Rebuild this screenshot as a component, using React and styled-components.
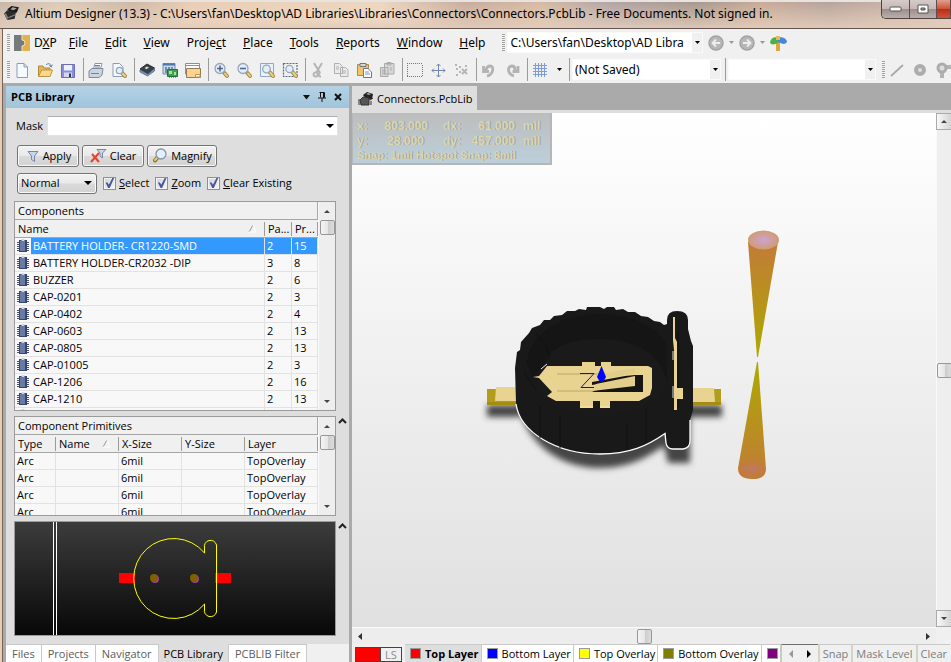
import React, { useState } from "react";
import styled, { createGlobalStyle, css } from "styled-components";

const Global = createGlobalStyle`
  *, *::before, *::after { box-sizing: border-box; }
  body { margin: 0; background: #aaa; }
  button, input, select { font: inherit; color: inherit; margin: 0; }
  button { padding: 0; border: 0; background: none; }
  svg { display: block; flex: none; }
`;

const Window = styled.div`
  display: flex;
  flex-direction: column;
  height: 100vh;
  min-height: 480px;
  overflow: hidden;
  color: #000;
  font: 11px/16px "Open Sans", "Noto Sans", sans-serif;
`;

const TitleBar = styled.header`
  display: flex;
  height: 29px;
  flex: none;
  border-bottom: 1px solid #65544b;
  box-shadow: inset 0 2px #e9e3df;
  background:
    linear-gradient(180deg, rgba(255, 238, 220, 0) 0%, rgba(240, 216, 194, 0.5) 70%, rgba(225, 205, 190, 0.9) 100%),
    linear-gradient(90deg, #c5b5a6, #dccbb9 6%, #cbb7a5 14%, #e9ccb4 20%, #ecd7c1 40%, #c5aa9c 49%, #d4b8a2 57%, #b0a2a6 64%, #a3958c 73%, #c6a896 80%, #b3a19a 87%, #d5bdac);
`;

const AppIcon = styled.div`
  padding: 5px 5px 0 3px;
`;

const WindowTitle = styled.h1`
  flex: 1;
  min-width: 0;
  margin: 0;
  overflow: hidden;
  white-space: nowrap;
  font-family: "Noto Sans", sans-serif;
  font-size: 12px;
  font-weight: 400;
  line-height: 27px;
`;

const Controls = styled.div`
  display: flex;
  height: 19px;
  border: 1px solid #4d4341;
  border-width: 0 0 1px 1px;
  border-radius: 0 0 0 5px;
  overflow: hidden;
`;

const ControlButton = styled.button`
  display: flex;
  align-items: center;
  justify-content: center;
  width: ${(p) => p.$w}px;
  border-right: 1px solid #5b4e4c;
  background: ${(p) =>
    p.$close
      ? "linear-gradient(#e0a090, #cf5238 48%, #b92c14 50%, #d0523a)"
      : "linear-gradient(#d5cbc9, #c5b8b6 48%, #9c8d8d 50%, #bcaeac)"};
`;

const Frame = styled.div`
  display: flex;
  flex: 1;
  flex-direction: column;
  min-height: 0;
  border-left: 2px solid #e6cdb8;
  box-shadow: inset 1px 0 #766459;
  padding-left: 1px;
  background: #aaa;
`;

const Bar = styled.div`
  display: flex;
  flex: none;
  align-items: center;
  height: 27px;
  padding-left: 4px;
  overflow: hidden;
  background: #f0f0f0;
  font-family: "Noto Sans", sans-serif;
  font-size: 12px;
`;

const Grip = styled.span`
  flex: none;
  width: 3px;
  height: 17px;
  margin-right: ${(p) => p.$after || 4}px;
  background: repeating-linear-gradient(180deg, #a0a0a0 0 1px, #f4f4f4 1px 2px);
`;

const MenuButton = styled.button`
  display: flex;
  flex: none;
  gap: 4px;
  align-items: center;
  margin-right: ${(p) => p.$after || 17}px;
  line-height: 20px;
  white-space: nowrap;
`;

const IconButton = styled.button`
  flex: none;
  width: 16px;
  height: 18px;
  margin-right: 7px;
`;

const Separator = styled.span`
  flex: none;
  width: 1px;
  height: 23px;
  margin-right: ${(p) => p.$after || 4}px;
  background: #9b9b9b;
`;

const CaretButton = styled.button`
  flex: none;
  display: flex;
  align-items: center;
  justify-content: center;
  width: ${(p) => p.$w || 8}px;
  height: 18px;
  margin-right: ${(p) => p.$after || 0}px;
`;

const ComboWrap = styled.span`
  position: relative;
  display: flex;
  flex: none;
  width: ${(p) => p.$w}px;
  height: 21px;
  margin-right: ${(p) => p.$after}px;
  background: #fff;
`;

const ComboSelect = styled.select`
  appearance: none;
  width: 100%;
  padding: 0 12px 0 2px;
  border: 1px solid #fafafa;
  border-radius: 0;
  background: transparent;
`;

const ComboArrow = styled.span`
  position: absolute;
  top: 1px;
  right: 1px;
  bottom: 1px;
  display: flex;
  align-items: center;
  justify-content: center;
  width: 10px;
  background: #f0f0f0;
  pointer-events: none;
`;

const Workspace = styled.main`
  display: grid;
  flex: 1;
  grid-template-columns: 343px minmax(0, 1fr);
  gap: 3px;
  min-height: 0;
  padding: 3px 0 0 3px;
`;

const Panel = styled.aside`
  display: flex;
  flex-direction: column;
  min-height: 0;
  background: #dedede;
`;

const PanelHeader = styled.div`
  display: flex;
  flex: none;
  align-items: center;
  height: 22px;
  padding: 0 3px 0 5px;
  background: linear-gradient(#b4d2e6, #a0c4da);
`;

const PanelTitle = styled.h2`
  flex: 1;
  margin: 0;
  font-size: 11px;
  font-weight: 700;
`;

const PanelTool = styled.button`
  width: 16px;
  height: 16px;
`;

const MaskRow = styled.div`
  display: flex;
  flex: none;
  align-items: center;
  gap: 4px;
  height: 20px;
  margin: 8px 11px 0 10px;
`;

const MaskField = styled.span`
  position: relative;
  display: flex;
  flex: 1;
`;

const MaskInput = styled.input`
  width: 100%;
  height: 20px;
  padding: 0 16px 0 3px;
  border: 1px solid #e2e3ea;
  border-top-color: #abadb3;
  outline: 0;
`;

const MaskArrow = styled.button`
  position: absolute;
  top: 8px;
  right: 4px;
`;

const ControlRow = styled.div`
  display: flex;
  flex: none;
  align-items: center;
  gap: ${(p) => p.$gap}px;
  height: 22px;
  margin: ${(p) => p.$top}px 11px 0 11px;
`;

const raised = css`
  border: 1px solid #747474;
  border-radius: 3px;
  box-shadow: inset 0 0 0 1px #f8f8f8;
  background: linear-gradient(#f2f2f2, #e9e9e9 48%, #dadada 52%, #d2d2d2);
`;

const PushButton = styled.button`
  ${raised}
  display: flex;
  align-items: center;
  justify-content: center;
  gap: ${(p) => p.$gap}px;
  width: ${(p) => p.$w}px;
  height: 22px;
`;

const ModeWrap = styled.span`
  ${raised}
  position: relative;
  display: flex;
  width: 80px;
  height: 21px;
`;

const ModeSelect = styled.select`
  appearance: none;
  width: 100%;
  padding: 0 14px 0 3px;
  border: 0;
  background: transparent;
`;

const ModeArrow = styled.span`
  position: absolute;
  top: 7px;
  right: 4px;
  pointer-events: none;
`;

const CheckLabel = styled.label`
  display: flex;
  align-items: center;
  gap: 3px;
  white-space: nowrap;
`;

const CheckBox = styled.input`
  appearance: none;
  flex: none;
  width: 13px;
  height: 13px;
  border: 1px solid #8e8f8f;
  box-shadow: inset 0 0 0 1px #f4f4f4;
  background: linear-gradient(135deg, #cfd3d9, #f6f6f6);
  &:checked::after {
    content: "";
    display: block;
    width: 11px;
    height: 11px;
    background: #44569c;
    clip-path: polygon(14% 45%, 32% 45%, 44% 65%, 76% 5%, 92% 5%, 52% 95%, 38% 95%);
  }
`;

const ListFrame = styled.section`
  display: flex;
  flex: ${(p) => (p.$h ? "none" : "1")};
  height: ${(p) => (p.$h ? `${p.$h}px` : "auto")};
  min-height: 0;
  border: 1px solid #9b9b9b;
  background: #f0f0f0;
`;

const ListSlot = styled.div`
  display: flex;
  flex-direction: column;
  flex: ${(p) => (p.$grow ? "1" : "none")};
  position: relative;
  min-height: 0;
  margin: ${(p) => p.$top}px 13px 0 8px;
`;

const ListMain = styled.div`
  flex: 1;
  min-width: 0;
  overflow: hidden;
  background: #f8f8f8;
`;

const ListTitle = styled.h3`
  height: 18px;
  margin: 0;
  padding-left: 3px;
  border-right: 1px solid #a6a6a6;
  border-bottom: 1px solid #a6a6a6;
  background: #f0f0f0;
  font-size: 11px;
  font-weight: 400;
  line-height: 18px;
`;

const Table = styled.table`
  width: 100%;
  table-layout: fixed;
  border-collapse: separate;
  border-spacing: 0;
`;

const Col = styled.col`
  width: ${(p) => (p.$w ? `${p.$w}px` : "auto")};
`;

const HeadCell = styled.th`
  position: relative;
  height: 18px;
  padding: 0 0 0 3px;
  border-bottom: 1px solid #a6a6a6;
  background: #f0f0f0;
  overflow: hidden;
  font-weight: 400;
  line-height: 16px;
  text-align: left;
  white-space: nowrap;
  &::after {
    content: "";
    position: absolute;
    top: 2px;
    right: 0;
    width: 1px;
    height: 14px;
    background: #9b9b9b;
  }
`;

const SortMark = styled.span`
  position: absolute;
  top: 4px;
  right: 8px;
`;

const Cell = styled.td`
  height: 17px;
  padding: 0 0 0 2px;
  border-right: 1px solid #e2e2e2;
  border-bottom: 1px solid #e2e2e2;
  overflow: hidden;
  line-height: 16px;
  white-space: nowrap;
  color: ${(p) => (p.$on ? "#fff" : "#000")};
  background: ${(p) => (p.$on ? "#3399ff" : "#f8f8f8")};
`;

const NameCell = styled(Cell)`
  background: ${(p) => (p.$on ? "linear-gradient(90deg, #f8f8f8 16px, #3399ff 16px)" : "#f8f8f8")};
`;

const NameInner = styled.span`
  display: flex;
  align-items: center;
  gap: 4px;
`;

const VScroll = styled.div`
  display: flex;
  flex: none;
  flex-direction: column;
  align-items: center;
  width: ${(p) => p.$w || 17}px;
  background: #eee;
  border-left: 1px solid #fafafa;
`;

const HScroll = styled.div`
  display: flex;
  align-items: center;
  height: 17px;
  background: #ededed;
  border-top: 1px solid #fafafa;
`;

const ScrollArrow = styled.button`
  display: flex;
  flex: none;
  align-items: center;
  justify-content: center;
  width: 16px;
  height: ${(p) => (p.$box ? 17 : 18)}px;
  ${(p) => p.$box && css`border: 1px solid #aaa; background: linear-gradient(90deg, #f8f8f8, #d4d4d4);`}
`;

const Thumb = styled.span`
  flex: none;
  width: 15px;
  height: 15px;
  border: 1px solid #979797;
  border-radius: 2px;
  background: linear-gradient(90deg, #f4f4f4, #e6e6e6 50%, #cdcdcd 55%, #dcdcdc);
`;

const Space = styled.span`
  flex: 1;
`;

const Collapse = styled.button`
  position: absolute;
  top: ${(p) => p.$top || 0}px;
  right: -11px;
`;

const Preview = styled.div`
  height: 115px;
  border: 1px solid #9b9b9b;
  background: linear-gradient(#3c3c3c, #080808);
  overflow: hidden;
`;

const PanelTabs = styled.div`
  display: flex;
  flex: none;
  height: 18px;
  margin-top: 8px;
  background: #f0f0f0;
  overflow: hidden;
`;

const PanelTab = styled.button`
  flex: none;
  padding: 1px ${(p) => (p.$on ? 5 : 6)}px 0;
  border-right: 1px solid #c9c9c9;
  border-top: 1px solid ${(p) => (p.$on ? "#dedede" : "#c9c9c9")};
  white-space: nowrap;
  line-height: 16px;
  color: ${(p) => (p.$on ? "#000" : "#5c5c5c")};
  background: ${(p) => (p.$on ? "#dedede" : "#fff")};
`;

const Document = styled.section`
  display: flex;
  flex-direction: column;
  min-width: 0;
  min-height: 0;
`;

const DocTabs = styled.div`
  flex: none;
  height: 27px;
  border-bottom: 3px solid #dedede;
`;

const DocTab = styled.button`
  display: flex;
  align-items: center;
  gap: 3px;
  height: 25px;
  padding: 0 4px 0 6px;
  background: #dedede;
`;

const ViewArea = styled.div`
  display: grid;
  flex: 1;
  grid-template-columns: minmax(0, 1fr) 15px;
  min-height: 0;
  background: #f0f0f0;
`;

const Canvas = styled.div`
  position: relative;
  overflow: hidden;
  background: linear-gradient(#ffffff, #e0e0e0);
`;

const Hud = styled.div`
  position: absolute;
  top: 0;
  left: 0;
  width: 200px;
  padding: 6px 4px;
  height: 52px;
  border: solid #b4b6b8;
  border-width: 0 2px 2px 1px;
  background: linear-gradient(#bdbdbd, #bccfdb);
  color: #dad7b2;
  font-family: "Liberation Sans", sans-serif;
  font-weight: 700;
  text-shadow: 1px 0 #9c9e96;
`;

const HudLine = styled.div`
  display: grid;
  grid-template-columns: 16px 55px 33px 54px 1fr;
  font-size: 12px;
  line-height: 15px;
`;

const HudValue = styled.span`
  padding-right: ${(p) => p.$pad || 0}px;
  text-align: right;
`;

const HudUnit = styled.span`
  padding-left: 8px;
`;

const HudSnap = styled.div`
  font-size: 11px;
  line-height: 13px;
`;

const LayerBar = styled.div`
  display: flex;
  flex: none;
  height: 18px;
  background: #f0f0f0;
  overflow: hidden;
  white-space: nowrap;
`;

const LayerSet = styled.button`
  display: flex;
  flex: none;
  width: 47px;
  height: 15px;
  margin: 3px 3px 0 3px;
  border: 1px solid #444;
  color: #8a8a8a;
  line-height: 14px;
`;

const CurrentColor = styled.span`
  width: 25px;
  height: 13px;
  margin-right: 4px;
  border-right: 1px solid #444;
  background: #f00;
`;

const LayerTab = styled.button`
  display: flex;
  flex: none;
  gap: 4px;
  align-items: center;
  height: 18px;
  padding: 0 2px 0 5px;
  border-top: 1px solid #c9c9c9;
  border-right: 1px solid #c9c9c9;
  font-weight: ${(p) => (p.$on ? 700 : 400)};
  background: ${(p) => (p.$on ? "#dedede" : "#fff")};
`;

const Swatch = styled.span`
  width: 11px;
  height: 11px;
  border: 1px solid #9a9a9a;
  background: ${(p) => p.$c};
`;

const TabNav = styled.div`
  display: flex;
  flex: none;
  align-items: center;
  justify-content: space-around;
  width: 37px;
  border-top: 1px solid #6f6f6f;
  border-left: 1px solid #c9c9c9;
`;

const StatusButton = styled.button`
  flex: none;
  padding: 1px 3px 0 3px;
  border-left: 2px solid #d3d3c8;
  border-top: 1px solid #c9c9c9;
  color: #7c7c7c;
  line-height: 16px;
`;

const Tri = ({ dir = "down", size = 5, color = "#000" }) => {
  const h = Math.ceil(size / 2);
  const shapes = {
    down: [size, h, `0,0 ${size},0 ${size / 2},${h}`],
    up: [size, h, `0,${h} ${size},${h} ${size / 2},0`],
    left: [h, size, `${h},0 ${h},${size} 0,${size / 2}`],
    right: [h, size, `0,0 0,${size} ${h},${size / 2}`],
  };
  const [w, ht, pts] = shapes[dir];
  return (
    <svg width={w} height={ht} aria-hidden="true">
      <polygon points={pts} fill={color} />
    </svg>
  );
};

const lens = (x, y, r, sign) => (
  <>
    <path d={`M${x + r - 1} ${y + r - 1}L14 14`} stroke="#a08a58" strokeWidth="4" strokeLinecap="round" />
    <path d={`M${x + r} ${y + r}L14 14`} stroke="#f5d06c" strokeWidth="2" strokeLinecap="round" />
    <circle cx={x} cy={y} r={r} fill="#e2eefb" stroke="#98a6ba" strokeWidth="1.300" />
    {sign && <path d={sign} stroke="#50688f" strokeWidth="1.600" />}
  </>
);

const glyphs = {
  new: (
    <path d="M3 1.500H10L13.500 5V15.500H3Z M10 1.500V5H13.500" fill="#f6faff" stroke="#8b9cb6" />
  ),
  open: (
    <>
      <path d="M1.500 14V4H6L7 6H13V14Z" fill="#e9b75a" stroke="#b08638" />
      <path d="M1.500 14.500L4.500 8H15.500L13 14.500Z" fill="#fbd989" stroke="#bd9347" />
      <path d="M9 3C11 .8 13.500 1.500 14 4M12.300 3.500L14.300 5L15.300 2.600" fill="none" stroke="#5d7ba5" />
    </>
  ),
  save: (
    <>
      <path d="M1.500 2.500H14.500V15.500H1.500Z" fill="#8a8fdc" stroke="#6b6db8" />
      <path d="M4 3H12V8.500H4Z" fill="#eef2fb" />
      <path d="M4 10.500H12V15H4Z" fill="#d4d8e6" />
      <path d="M9 11.500H11V15H9Z" fill="#30355e" />
    </>
  ),
  print: (
    <>
      <path d="M5.500 7L7 1.500H14L12.500 7Z" fill="#fff" stroke="#8894a8" />
      <path d="M1 9L4 6.500H15L14 13L11 15.500H1Z" fill="#ccd4e0" stroke="#7d8aa0" />
      <path d="M3 11.500H11M7 3.500H12M7 5H12" stroke="#6b86b2" />
    </>
  ),
  preview: (
    <>
      <path d="M2 1.500H8.500L12 5V14.500H2Z" fill="#f6faff" stroke="#8b9cb6" />
      {lens(8.5, 8.5, 3.2)}
    </>
  ),
  chip: (
    <>
      <path d="M1 7L8 2L15.500 6L9 12Z" fill="#3b3f46" stroke="#2c2f34" />
      <path d="M1 8V10L8.500 14L15.500 9V6.500L9 12Z" fill="#7c99bd" stroke="#45597a" strokeWidth=".7" />
      <path d="M5.500 6L8 4.500L10 5.500L7.500 7.300Z" fill="#d4dbe2" />
    </>
  ),
  board: (
    <>
      <path d="M1 1.500H13V12H1Z" fill="#cad8eb" stroke="#718bb0" />
      <path d="M1 2.500H13" stroke="#4d75ae" strokeWidth="2" />
      <path d="M3 6H11M3 8H11M3 10H11" stroke="#4e7b87" strokeDasharray="2 1" strokeWidth="1.300" />
      <path d="M5.500 7.500H15.500V14.500H5.500Z" fill="#3f9e51" stroke="#23713a" />
      <path d="M7 9H10V12H7ZM12 10H14V13H12Z" fill="#a1e39a" />
      <path d="M7 15.500H14" stroke="#b99a34" strokeDasharray="1 1" />
    </>
  ),
  panels: (
    <>
      <path d="M.5 1.500H14.500V12H.5ZM1 3.500H14" fill="#fff" stroke="#9b8c7a" />
      <path d="M1.500 6.500H15.500V15.500H1.500Z" fill="#fcd38c" stroke="#8f7c60" />
      <path d="M10.500 15V12.500H15V15Z" fill="#fff" stroke="#c79445" />
    </>
  ),
  zoomIn: lens(7, 6.5, 5, "M4 6.5H10M7 3.5V9.5"),
  zoomOut: lens(7, 6.5, 5, "M4 6.5H10"),
  zoomDoc: (
    <>
      <path d="M1.500 1.500H14.500V14.500H1.500Z" fill="#e8f2ff" stroke="#93a6c2" />
      {lens(7.5, 7, 3.8)}
    </>
  ),
  zoomSel: (
    <>
      <path d="M1.500 1.500H15V14.500H1.500Z" fill="none" stroke="#54698d" strokeDasharray="2 1" strokeWidth="1.200" />
      {lens(7.5, 7, 3.6)}
    </>
  ),
  cut: (
    <path d="M4 1L10 11M12 1L6 11M5.500 10.500A2 2 0 1 0 5.600 14.500A2 2 0 0 0 6 10.500M10.500 10.500A2 2 0 1 0 11 14.500" stroke="#b4b4b4" strokeWidth="2" fill="none" />
  ),
  copy: (
    <path d="M1.500 1.500H6.500L9.500 4.500V11.500H1.500ZM7.500 5.500H12.500L15 8V14.500H7.500ZM9 9H13M9 11H13M3 5H6M3 7H6" fill="#ebebeb" stroke="#b0b0b0" />
  ),
  paste: (
    <>
      <path d="M1.500 2.500H12.500V13.500H1.500Z" fill="#f0c468" stroke="#b18a42" />
      <path d="M4 1.500H10V4.500H4Z" fill="#d5d9e2" stroke="#7d746c" />
      <path d="M7.500 6.500H12L15.500 10V15.500H7.500Z" fill="#fff" stroke="#607bab" />
      <path d="M9 10H13M9 12H14" stroke="#7895c4" />
    </>
  ),
  pasteMulti: (
    <path d="M5.500 1.500H15V12H5.500ZM8 .5H12V3H8ZM1.500 5.500H9V14.500H1.500ZM3 8H7M3 10H7M3 12H7M11 6H13M11 8H13" fill="#d8d8d8" stroke="#ababab" />
  ),
  select: <path d="M0 1.500H16M0 14.500H16M.5 3V14M15.500 3V14" fill="none" stroke="#777" strokeDasharray="1 1" />,
  move: (
    <path d="M8.500 2V15M2 8.500H15M6.500 4L8.500 2L10.500 4M6.500 13L8.500 15L10.500 13M4 6.500L2 8.500L4 10.500M13 6.500L15 8.500L13 10.500" fill="none" stroke="#7387ad" />
  ),
  deselect: (
    <path d="M2 3H4M6 5H8M3 7H5M6 10H8M3 13H5M9 7L14 12M14 7L9 12M12 4H14" fill="none" stroke="#b5b5b5" strokeWidth="2" />
  ),
  undo: <path d="M6 14C12 13 14 4 9 4C6.500 4 5.500 6 5 8M2.500 4V9.500H8" fill="none" stroke="#b3b3b3" strokeWidth="2.800" />,
  redo: <path d="M10 14C3 12 3 4 8 4C10.500 4 11 6 11 8M14 4V9.500H8.500" fill="none" stroke="#b3b3b3" strokeWidth="2.800" />,
  grid: <path d="M3.500 1V15M6.500 1V15M9.500 1V15M12.500 1V15M1 3.500H15M1 6.500H15M1 9.500H15M1 12.500H15" stroke="#7f9cd8" />,
  line: <path d="M2 14L14 3" stroke="#aaa" strokeWidth="1.800" />,
  pad: <circle cx="8" cy="8" r="4" fill="#ddd" stroke="#acacac" strokeWidth="4" />,
  via: (
    <>
      <path d="M7 8V16M8 5H16" stroke="#b3b3b3" strokeWidth="4" />
      <circle cx="7" cy="6" r="4" fill="#ddd" stroke="#acacac" strokeWidth="3" />
    </>
  ),
  dxp: (
    <>
      <path d="M0 0H8V5A3 3 0 0 1 8 11V16H0Z" fill="#777a7c" />
      <path d="M8 0H16V16H8V11A3 3 0 0 0 8 5Z" fill="#dfb24b" />
      <path d="M8 0V5A3 3 0 0 1 8 11V16" fill="none" stroke="#efe3bd" />
    </>
  ),
  back: (
    <>
      <circle cx="8" cy="8" r="7" fill="#b7b7b7" stroke="#a3a3a3" strokeWidth="1.500" />
      <path d="M12 8H5M8 4.500L4.500 8L8 11.500" fill="none" stroke="#eee" strokeWidth="1.800" />
    </>
  ),
  forward: (
    <>
      <circle cx="8" cy="8" r="7" fill="#b7b7b7" stroke="#a3a3a3" strokeWidth="1.500" />
      <path d="M4 8H11M8 4.500L11.500 8L8 11.500" fill="none" stroke="#eee" strokeWidth="1.800" />
    </>
  ),
  home: (
    <>
      <path d="M6 6H10V16H6Z" fill="#dba73a" />
      <path d="M0 7C1 3 5 1 8 3L8 8C4 10 0 10 0 7Z" fill="#4fae48" />
      <path d="M8 3C12 1 17 4 17 7C15 10 12 9 8 7Z" fill="#4a86d8" />
      <path d="M6 1H10V5H6Z" fill="#e2bd50" />
    </>
  ),
  app: (
    <>
      <path d="M4 4L8 1L15 2L13 7L8 9Z" fill="#1c1c1c" />
      <path d="M7 4L9 2L13 3L10 5Z" fill="#a5a5a5" />
      <path d="M1 8L4 5L12 7L11 13L4 14Z" fill="#2b2b2b" />
      <path d="M1 8L3 8L5 12L4 14Z" fill="#7d7d7d" />
      <path d="M5 12L12 9" stroke="#8a8a8a" />
    </>
  ),
  doc: (
    <>
      <path d="M5 4L9 1L15 3L14 8L9 9Z" fill="#222" />
      <path d="M8 3L10 2L13 3L11 4Z" fill="#aaa" />
      <path d="M2 9L5 6L11 7V14H3Z" fill="#555" stroke="#333" />
      <path d="M0 9H2M0 11H2M0 13H2M12 9L15 7M12 11H14M12 13H14" stroke="#333" />
    </>
  ),
  funnel: <path d="M3 3.500H13L9.500 8V13.500L6.500 11.500V8Z" fill="#c9d5e8" stroke="#7588a8" />,
  clear: (
    <>
      <path d="M7 1.500H16L12.500 5V10L10 8V5Z" fill="#c9d5e8" stroke="#7588a8" />
      <path d="M2 6L9 14M9 5L1 14" stroke="#e2452f" strokeWidth="2" />
    </>
  ),
  magnify: (
    <>
      <path d="M5 10L3 12.500" stroke="#967128" strokeWidth="4" strokeLinecap="round" />
      <path d="M5 10L3 12" stroke="#f0cf6a" strokeWidth="2" strokeLinecap="round" />
      <circle cx="9" cy="6" r="5" fill="#e4f0ff" stroke="#8494ab" strokeWidth="1.300" />
    </>
  ),
};

const Icon = ({ name, size = 16 }) => (
  <svg width={size} height={size} viewBox="0 0 16 16" overflow="visible" fill="none" aria-hidden="true">
    {glyphs[name]}
  </svg>
);

const Tool = ({ name, label }) => (
  <IconButton aria-label={label || name}>
    <Icon name={name} />
  </IconButton>
);

const Combo = ({ label, value, w, after }) => (
  <ComboWrap $w={w} $after={after}>
    <ComboSelect aria-label={label}>
      <option>{value}</option>
    </ComboSelect>
    <ComboArrow>
      <Tri />
    </ComboArrow>
  </ComboWrap>
);

const PartIcon = () => (
  <svg width="12" height="14" viewBox="0 0 12 14" aria-hidden="true">
    <path d="M0 3.500H12M0 5.500H12M0 7.500H12M0 9.500H12M0 11.500H12" stroke="#4b4f5e" />
    <rect x="2" y="1" width="8" height="12" fill="#33466f" />
    <rect x="3" y="2" width="5" height="10" fill="#6a7aa4" />
    <path d="M4.500 0H7.500V2H4.500Z" fill="#cfd6e4" />
  </svg>
);

const SortIcon = () => (
  <SortMark>
    <svg width="9" height="9" aria-hidden="true">
      <path d="M1 8L5 1" stroke="#999" />
      <path d="M5 1L8 8H1" fill="none" stroke="#fff" />
    </svg>
  </SortMark>
);

const Chevron = ({ top, label }) => (
  <Collapse $top={top} aria-label={label}>
    <svg width="9" height="6" aria-hidden="true">
      <path d="M1 5L4.500 1.500L8 5" fill="none" stroke="#222" strokeWidth="2" />
    </svg>
  </Collapse>
);

const ListScroll = () => (
  <VScroll>
    <ScrollArrow aria-label="Scroll up"><Tri dir="up" size={6} color="#444" /></ScrollArrow>
    <Thumb />
    <Space />
    <ScrollArrow aria-label="Scroll down"><Tri size={6} color="#444" /></ScrollArrow>
  </VScroll>
);

const menus = [
  ["", "F", "ile"],
  ["", "E", "dit"],
  ["", "V", "iew"],
  ["Proje", "c", "t"],
  ["", "P", "lace"],
  ["", "T", "ools"],
  ["", "R", "eports"],
  ["", "W", "indow"],
  ["", "H", "elp"],
];

const components = [
  ["BATTERY HOLDER- CR1220-SMD", 2, 15],
  ["BATTERY HOLDER-CR2032 -DIP", 3, 8],
  ["BUZZER", 2, 6],
  ["CAP-0201", 2, 3],
  ["CAP-0402", 2, 4],
  ["CAP-0603", 2, 13],
  ["CAP-0805", 2, 13],
  ["CAP-01005", 2, 3],
  ["CAP-1206", 2, 16],
  ["CAP-1210", 2, 13],
  ["", "", ""],
];

const layers = [
  ["Top Layer", "#ff0000"],
  ["Bottom Layer", "#0000ff"],
  ["Top Overlay", "#ffff00"],
  ["Bottom Overlay", "#808000"],
];

const FootprintPreview = () => (
  <svg width="100%" height="100%" viewBox="15 522 320 113" preserveAspectRatio="xMidYMid slice" aria-label="Footprint">
    <path d="M53.500 520V640M56.500 520V640" stroke="#fff" />
    <path d="M119 573H135V583H119ZM215 573H231V583H215Z" fill="#f00" />
    <g>
      <circle cx="155" cy="579" r="4" fill="#a040a0" />
      <circle cx="195" cy="579" r="4" fill="#a040a0" />
      <circle cx="154" cy="578" r="4" fill="#806000" />
      <circle cx="194" cy="578" r="4" fill="#806000" />
    </g>
    <path d="M204.500 553A40 40 0 1 0 204.500 604V609A6 6 0 0 0 216.500 612V545A6 6 0 0 0 204.500 548Z" fill="none" stroke="#ff0" />
  </svg>
);

const body =
  "M515 368L517 352L520 350L521 342L529 333L532 328L540 325L544 320L550 320L554 316L562 315L567 311L575 311L579 309L586 310L587 307H600L604 309L607 307H614L616 310L623 309L628 312L635 312L641 316L648 317L654 321L660 322L664 325L667 324V320Q667 311 677 311Q688 311 688 320V329L691 341L693 346V410L690 420V441Q690 449 683 449H673Q666 449 666 443V433C646 447 630 454 600 454C555 454 518 432 516 403Z";

const BatteryHolder = () => (
  <svg width="100%" height="100%" viewBox="352 113 584 514" aria-label="3D footprint model">
    <defs>
      <filter id="soft" x="-20%" y="-20%" width="140%" height="150%">
        <feGaussianBlur stdDeviation="3" />
      </filter>
      <linearGradient id="coneTop" x1="0" y1="0" x2="0" y2="1">
        <stop offset="0" stopColor="#c27b38" />
        <stop offset="1" stopColor="#aea900" />
      </linearGradient>
      <linearGradient id="coneBottom" x1="0" y1="0" x2="0" y2="1">
        <stop offset="0" stopColor="#aea900" />
        <stop offset="1" stopColor="#c27b38" />
      </linearGradient>
      <radialGradient id="capTop">
        <stop offset="0" stopColor="#cfa2d4" />
        <stop offset="1" stopColor="#cf9c72" />
      </radialGradient>
      <radialGradient id="capBottom">
        <stop offset="0" stopColor="#be7a62" />
        <stop offset="1" stopColor="#c27b38" />
      </radialGradient>
    </defs>
    <g filter="url(#soft)" fill="#444">
      <path d="M518 400C522 436 553 468 600 468C631 468 650 455 664 446L668 463H690V400Z" />
      <path d="M487 405H520V417H487ZM690 405H722V417H690Z" />
    </g>
    <path d="M487 389H517V405H487ZM690 389H721V405H690Z" fill="#b29d1e" />
    <path d="M487 402H517V405H487ZM690 402H721V405H690Z" fill="#a58d12" />
    <path d="M496 387H517V401H495ZM690 388H714L715 402H690Z" fill="#e9d391" />
    <path d={body} fill="#191919" />
    <path d="M516 404C520 432 556 454 600 454C630 454 647 446 665 433.500L666 443Q667 449 673 449H683Q690 448 690 441V420" fill="none" stroke="#fff" strokeWidth="1.300" />
    <path d="M528 357C532 334 560 314 600 314C635 314 659 330 667 344V380C660 353 635 339 600 339C570 339 548 348 543 365L533 377L526 362Z" fill="#151515" />
    <path d="M543 367C548 348 570 339 600 339C635 339 661 355 667 382V385C656 406 630 416 599 416C565 416 540 402 536 385Z" fill="#1a1a1a" />
    <path d="M536 333L546 345L550 357L542 365M524 372L536 390M627 424V450M560 416V448M540 406V438M646 408V442M678 331V408" stroke="#111" fill="none" />
    <path d="M533 377L539 376L547 366H582V362H595V366H601V362H611V366H648L652 368V388L650 395L639 401H610V408H600V401H593V408H580V401H556L547 396L552 392L539 378Z" fill="#e9d391" />
    <path d="M557 374H600M557 391H594" fill="none" stroke="#d2bd7f" strokeWidth="2" />
    <path d="M600 374L635 368V373L608 378Z" fill="#e1cc8a" />
    <path d="M592 382L625 376L635 375H643V392H594L592 391L635 383V378L592 385Z" fill="#151515" />
    <path d="M592 391L635 386V376L596 384Z" fill="#e3cd8b" />
    <path d="M580 406H593V408H580ZM600 406H610V408H600Z" fill="#fadb96" />
    <path d="M541 369L547 364" stroke="#eee" fill="none" />
    <path d="M580 373.500H594L581 387.500H594" stroke="#0719a0" fill="none" />
    <path d="M601.500 366L606 377L603 382H600L597 377Z" fill="#00f" />
    <path d="M673 317H675V338L677 342V388H683V399H677V410H674V350L673 340Z" fill="#e9d391" />
    <path d="M673 351V360M673 386V398" stroke="#ddd" />
    <path d="M748 242L757 357H758L778 242Z" fill="url(#coneTop)" />
    <ellipse cx="763.500" cy="240" rx="15.500" ry="9.500" fill="url(#capTop)" />
    <path d="M757 362H758L766 469Q766 479 752 479Q738 479 738 468Z" fill="url(#coneBottom)" />
    <ellipse cx="752" cy="469" rx="13" ry="8" fill="url(#capBottom)" />
  </svg>
);

export default function App() {
  const [checks, setChecks] = useState({ select: true, zoom: true, existing: true });
  const [selected, setSelected] = useState(0);
  const toggle = (key) => () => setChecks((c) => ({ ...c, [key]: !c[key] }));

  return (
    <Window>
      <Global />
      <TitleBar>
        <AppIcon><Icon name="app" size={17} /></AppIcon>
        <WindowTitle>
          {"Altium Designer (13.3) - C:\\Users\\fan\\Desktop\\AD Libraries\\Libraries\\Connectors\\Connectors.PcbLib - Free Documents. Not signed in."}
        </WindowTitle>
        <Controls>
          <ControlButton $w={28} aria-label="Minimize">
            <svg width="13" height="6"><rect x="1" y="1" width="11" height="4" rx="1" fill="#fff" stroke="#555" /></svg>
          </ControlButton>
          <ControlButton $w={27} aria-label="Maximize">
            <svg width="12" height="10"><path d="M1 1H11V9H1Z" fill="#fff" stroke="#555" /><path d="M4 4H8V6H4Z" fill="#a99" stroke="#555" /></svg>
          </ControlButton>
          <ControlButton $w={14} $close aria-label="Close" />
        </Controls>
      </TitleBar>
      <Frame>
        <Bar as="nav">
          <Grip />
          <MenuButton $after={12}><Icon name="dxp" /><span>D<u>X</u>P</span></MenuButton>
          {menus.map(([a, b, c]) => (
            <MenuButton key={a + b + c}><span>{a}<u>{b}</u>{c}</span></MenuButton>
          ))}
          <Grip $after={2} />
          <Combo label="Address" value={"C:\\Users\\fan\\Desktop\\AD Libra"} w={196} after={5} />
          <Icon name="back" />
          <CaretButton $w={15} aria-label="Back history"><Tri color="#999" /></CaretButton>
          <Icon name="forward" />
          <CaretButton $w={15} aria-label="Forward history"><Tri color="#999" /></CaretButton>
          <Tool name="home" label="Home" />
        </Bar>
        <Bar>
          <Grip />
          <Tool name="new" /><Tool name="open" /><Tool name="save" />
          <Separator />
          <Tool name="print" /><Tool name="preview" />
          <Separator />
          <Tool name="chip" /><Tool name="board" /><Tool name="panels" />
          <Separator />
          <Tool name="zoomIn" /><Tool name="zoomOut" /><Tool name="zoomDoc" /><Tool name="zoomSel" />
          <Separator />
          <Tool name="cut" /><Tool name="copy" /><Tool name="paste" /><Tool name="pasteMulti" />
          <Separator />
          <Tool name="select" /><Tool name="move" /><Tool name="deselect" />
          <Separator />
          <Tool name="undo" /><Tool name="redo" />
          <Separator />
          <Tool name="grid" />
          <CaretButton $after={6} aria-label="Grid options"><Tri /></CaretButton>
          <Separator $after={2} />
          <Combo label="Saved view" value="(Not Saved)" w={149} after={4} />
          <Separator $after={2} />
          <Combo label="Filter" value="" w={148} after={6} />
          <Grip />
          <Tool name="line" /><Tool name="pad" /><Tool name="via" />
        </Bar>
        <Workspace>
          <Panel>
            <PanelHeader>
              <PanelTitle>PCB Library</PanelTitle>
              <PanelTool aria-label="Panel menu"><svg width="16" height="16"><path d="M5 6H12L8.500 10.500Z" fill="#111" /></svg></PanelTool>
              <PanelTool aria-label="Pin"><svg width="16" height="16"><path d="M5.500 3.500H10.500V8.500M6.500 3.500V8.500M9.500 3V9M4 9H12M8 9V13" stroke="#111" fill="none" /></svg></PanelTool>
              <PanelTool aria-label="Close panel"><svg width="16" height="16"><path d="M5 5L11 11M11 5L5 11" stroke="#111" strokeWidth="2" /></svg></PanelTool>
            </PanelHeader>
            <MaskRow>
              <label htmlFor="mask">Mask</label>
              <MaskField>
                <MaskInput id="mask" />
                <MaskArrow aria-label="Mask history"><Tri size={8} /></MaskArrow>
              </MaskField>
            </MaskRow>
            <ControlRow $gap={3} $top={9}>
              <PushButton $w={62} $gap={2}><Icon name="funnel" />Apply</PushButton>
              <PushButton $w={62} $gap={4}><Icon name="clear" />Clear</PushButton>
              <PushButton $w={70} $gap={3}><Icon name="magnify" />Magnify</PushButton>
            </ControlRow>
            <ControlRow $gap={6} $top={5}>
              <ModeWrap>
                <ModeSelect aria-label="Mode"><option>Normal</option></ModeSelect>
                <ModeArrow><Tri size={8} /></ModeArrow>
              </ModeWrap>
              <CheckLabel>
                <CheckBox type="checkbox" checked={checks.select} onChange={toggle("select")} />
                <span><u>S</u>elect</span>
              </CheckLabel>
              <CheckLabel>
                <CheckBox type="checkbox" checked={checks.zoom} onChange={toggle("zoom")} />
                <span><u>Z</u>oom</span>
              </CheckLabel>
              <CheckLabel>
                <CheckBox type="checkbox" checked={checks.existing} onChange={toggle("existing")} />
                <span><u>C</u>lear Existing</span>
              </CheckLabel>
            </ControlRow>
            <ListSlot $grow $top={7}>
              <ListFrame>
                <ListMain>
                  <ListTitle>Components</ListTitle>
                  <Table>
                    <colgroup><Col /><Col $w={27} /><Col $w={26} /></colgroup>
                    <thead>
                      <tr>
                        <HeadCell>Name<SortIcon /></HeadCell>
                        <HeadCell>Pa...</HeadCell>
                        <HeadCell>Pr...</HeadCell>
                      </tr>
                    </thead>
                    <tbody>
                      {components.map(([name, pads, prims], i) => (
                        <tr key={i} onClick={() => setSelected(i)}>
                          <NameCell $on={i === selected}><NameInner><PartIcon />{name}</NameInner></NameCell>
                          <Cell $on={i === selected}>{pads}</Cell>
                          <Cell $on={i === selected}>{prims}</Cell>
                        </tr>
                      ))}
                    </tbody>
                  </Table>
                </ListMain>
                <ListScroll />
              </ListFrame>
            </ListSlot>
            <ListSlot $top={5}>
              <ListFrame $h={100}>
                <ListMain>
                  <ListTitle>Component Primitives</ListTitle>
                  <Table>
                    <colgroup><Col $w={41} /><Col $w={63} /><Col $w={63} /><Col $w={63} /><Col /></colgroup>
                    <thead>
                      <tr>
                        <HeadCell>Type</HeadCell>
                        <HeadCell>Name<SortIcon /></HeadCell>
                        <HeadCell>X-Size</HeadCell>
                        <HeadCell>Y-Size</HeadCell>
                        <HeadCell>Layer</HeadCell>
                      </tr>
                    </thead>
                    <tbody>
                      {[0, 1, 2, 3].map((i) => (
                        <tr key={i}>
                          <Cell>Arc</Cell><Cell /><Cell>6mil</Cell><Cell /><Cell>TopOverlay</Cell>
                        </tr>
                      ))}
                    </tbody>
                  </Table>
                </ListMain>
                <ListScroll />
              </ListFrame>
              <Chevron top={2} label="Collapse primitives" />
            </ListSlot>
            <ListSlot $top={5}>
              <Preview><FootprintPreview /></Preview>
              <Chevron top={2} label="Collapse preview" />
            </ListSlot>
            <PanelTabs>
              {["Files", "Projects", "Navigator", "PCB Library", "PCBLIB Filter"].map((t) => (
                <PanelTab key={t} $on={t === "PCB Library"}>{t}</PanelTab>
              ))}
            </PanelTabs>
          </Panel>
          <Document>
            <DocTabs>
              <DocTab><Icon name="doc" />Connectors.PcbLib</DocTab>
            </DocTabs>
            <ViewArea>
              <Canvas>
                <BatteryHolder />
                <Hud>
                  <HudLine>
                    <span>x:</span><HudValue>803.000</HudValue><HudValue>dx:</HudValue><HudValue>61.000</HudValue><HudUnit>mil</HudUnit>
                  </HudLine>
                  <HudLine>
                    <span>y:</span><HudValue $pad={4}>28.000</HudValue><HudValue>dy:</HudValue><HudValue>457.000</HudValue><HudUnit>mil</HudUnit>
                  </HudLine>
                  <HudSnap>Snap: 1mil Hotspot Snap: 8mil</HudSnap>
                </Hud>
              </Canvas>
              <VScroll $w={15}>
                <ScrollArrow $box aria-label="Scroll up"><Tri dir="up" size={6} color="#444" /></ScrollArrow>
                <Space />
                <Thumb />
                <Space />
                <ScrollArrow $box aria-label="Scroll down"><Tri size={6} color="#444" /></ScrollArrow>
              </VScroll>
              <HScroll>
                <ScrollArrow aria-label="Scroll left"><Tri dir="left" size={7} color="#333" /></ScrollArrow>
                <Space />
                <Thumb />
                <Space />
                <ScrollArrow aria-label="Scroll right"><Tri dir="right" size={7} color="#333" /></ScrollArrow>
              </HScroll>
            </ViewArea>
            <LayerBar>
              <LayerSet><CurrentColor />LS</LayerSet>
              {layers.map(([name, c], i) => (
                <LayerTab key={name} $on={i === 0}><Swatch $c={c} />{name}</LayerTab>
              ))}
              <LayerTab aria-label="Next layer"><Swatch $c="#800080" /></LayerTab>
              <TabNav>
                <button aria-label="Previous layers"><Tri dir="left" size={8} color="#999" /></button>
                <button aria-label="More layers"><Tri dir="right" size={8} /></button>
              </TabNav>
              <StatusButton>Snap</StatusButton>
              <StatusButton>Mask Level</StatusButton>
              <StatusButton>Clear</StatusButton>
            </LayerBar>
          </Document>
        </Workspace>
      </Frame>
    </Window>
  );
}
